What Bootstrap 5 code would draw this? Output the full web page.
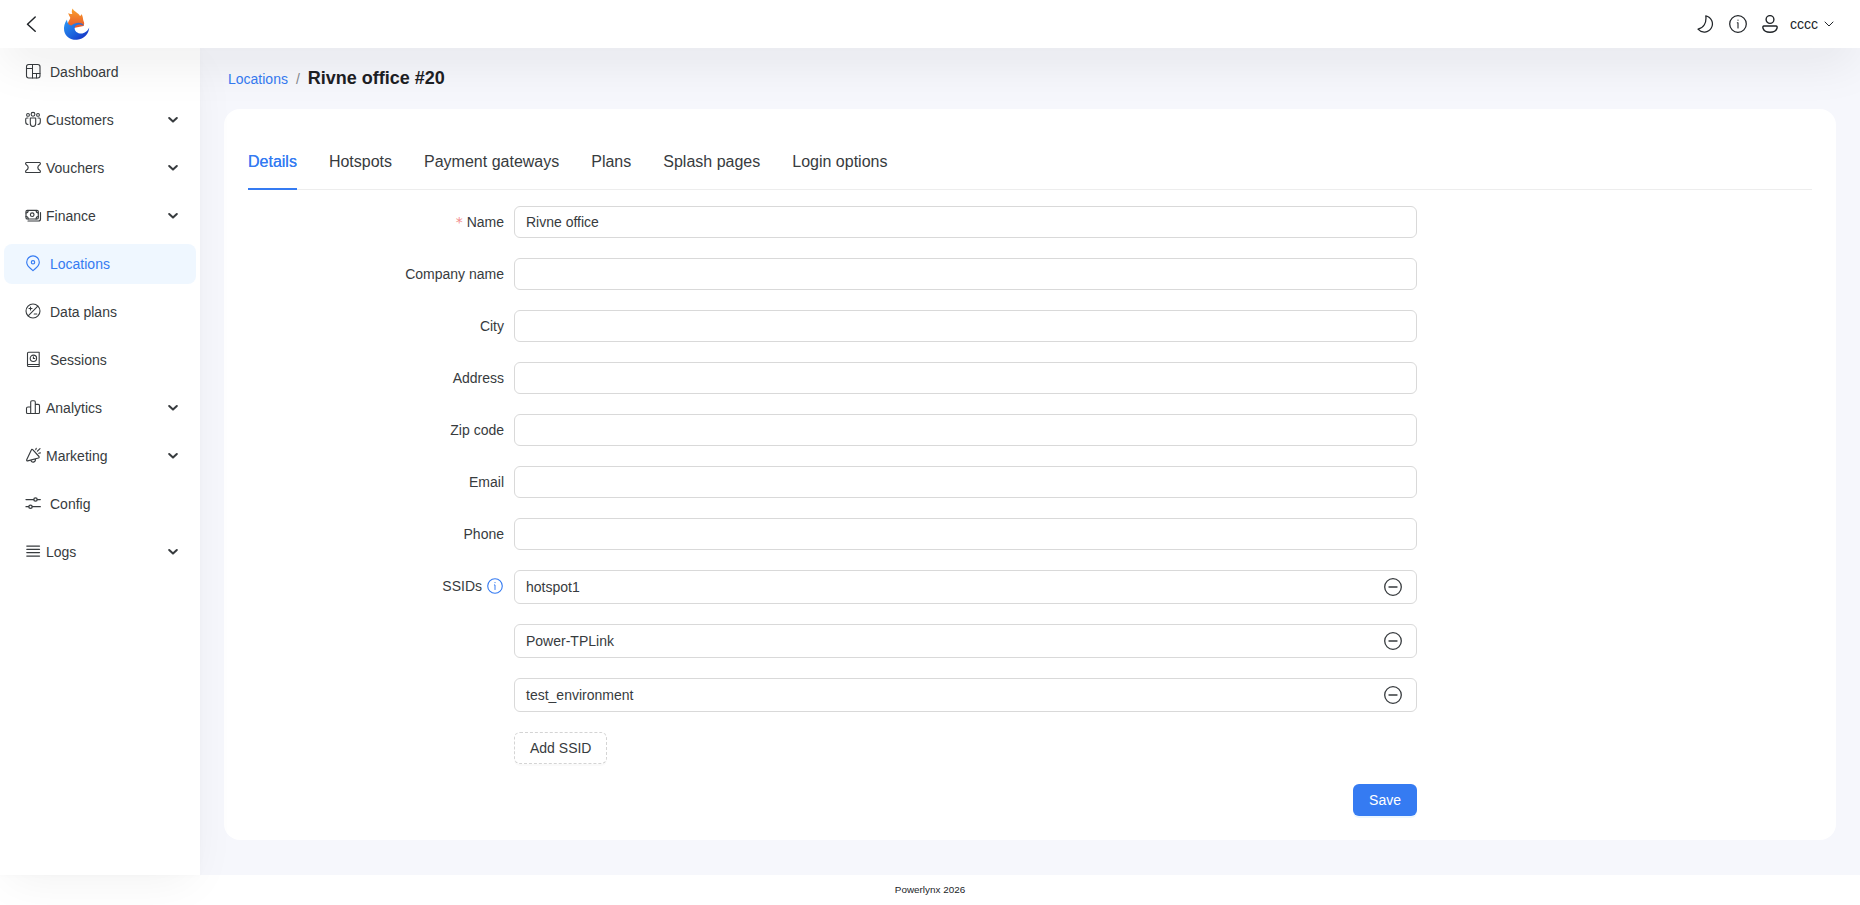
<!DOCTYPE html>
<html lang="en">
<head>
<meta charset="utf-8">
<meta name="viewport" content="width=device-width, initial-scale=1">
<title>Rivne office #20</title>
<link href="https://cdn.jsdelivr.net/npm/bootstrap@5.3.0/dist/css/bootstrap.min.css" rel="stylesheet">
<style>
:root { --ink: #373b3e; --blue: #357bf2; }
body { font: 14px/22px "Liberation Sans", Arial, sans-serif; color: var(--ink); background: #f6f7fc; height: 100vh; overflow: hidden; }
svg { display: block; flex: none; fill: none; stroke: currentColor; stroke-linecap: round; stroke-linejoin: round; }
.topbar { height: 48px; z-index: 3; padding: 0 26px 0 22px; box-shadow: 0 16px 50px -4px rgba(20,20,20,.085); color: #212529; }
.brand-mark { margin: 0 auto 0 21px; }
.tools { gap: 14px; margin-right: 11px; }
.sidebar { width: 200px; z-index: 2; padding: 4px; box-shadow: 0 12px 45px -8px rgba(20,20,20,.06), 0 0 6px rgba(20,20,20,.02); }
.sidebar .nav-link { height: 40px; padding: 0 18px 0 20px; margin-bottom: 8px; border-radius: 8px; color: var(--ink); gap: 8px; }
.sidebar .nav-link.has-menu { gap: 4px; }
.sidebar .nav-link.active { background: #eff7ff; color: var(--blue); }
.content-area { padding: 17px 24px 35px; }
.crumbs { height: 44px; padding-left: 4px; }
.crumbs a, .tabline .active { color: var(--blue) !important; }
.crumbs a { padding-top: 3px; }
.crumbs .divider { padding: 3px 8px 0; color: #85888c; }
.crumbs h1 { font-size: 18px; line-height: 26px; color: #1d2024; }
.panel { border-radius: 16px; padding: 32px 24px 0; }
.tabline { gap: 32px; border-bottom: 1px solid #ededed; height: 49px; margin-bottom: 16px; }
.tabline .nav-link { font-size: 16px; line-height: 24px; padding: 9px 0 0; height: 49px; color: var(--ink); }
.tabline .active { border-bottom: 2px solid var(--blue); text-shadow: 0 0 .25px currentColor; }
.field-row { margin-bottom: 20px; }
.field-label { width: 266px; height: 32px; padding-right: 10px; }
.required-star { color: #f28b8b; margin-right: 4px; font-family: "DejaVu Sans", sans-serif; }
.hint { color: var(--blue); margin: 0 1px 0 5px; }
.field-box { width: 903px; }
.form-control { height: 32px; border: 1px solid #d9d9d9; border-radius: 6px; padding: 4px 11px; font-size: 14px; line-height: 22px; color: var(--ink); }
.ssid { height: 34px; padding-right: 14px; }
.btn { font-size: 14px; line-height: 22px; height: 32px; padding: 4px 15px; border-radius: 6px; }
.btn-add { border: 1px dashed #d4d4d4; background: #fff; color: var(--ink); box-shadow: 0 2px 0 rgba(0,0,0,.02); }
.btn-save { background: var(--blue); color: #fff; box-shadow: 0 2px 0 rgba(5,145,255,.08); }
.foot { height: 30px; font-size: 9.900px; color: #212529; }
</style>
</head>
<body class="d-flex flex-column">
<header class="topbar bg-white d-flex align-items-center position-relative">
  <svg width="20" height="20" viewBox="0 0 20 20" stroke-width="1.5"><path d="M13.2 3 5.500 10.200 13.200 17.200"/></svg>
  <svg class="brand-mark" width="28" height="34" viewBox="0 0 28 34" stroke="none">
    <defs>
      <linearGradient id="flame" x1="0" y1="0" x2="0" y2="1"><stop stop-color="#fba22c"/><stop offset="1" stop-color="#e4502b"/></linearGradient>
      <linearGradient id="wave" x1="0" y1="0" x2="1" y2="1"><stop stop-color="#2d9af5"/><stop offset=".55" stop-color="#1c62dc"/><stop offset="1" stop-color="#1524bd"/></linearGradient>
    </defs>
    <path fill="url(#flame)" stroke="none" d="M5 18C4.500 14 7.500 12.500 7.200 10.500 6.600 9 5.500 8 5.300 6 6.500 7 8 7.300 9.300 6.700 8.500 5 8.700 3 9.700 1.500c.8 3 5.600 4 7.300 7.500.8-.2 1.200-1 1.300-2C20.300 9.500 19.800 12 20.500 14c.9 1.500.9 3.300 0 5L6 22z"/>
    <path fill="url(#wave)" stroke="none" d="M4 12.500C1.500 16 .5 20 1.200 24 2.500 30 8 33.300 14 32.800 21 32 26 27 26.200 20.500c-1.700 3.800-5.200 6.600-9.200 6-4-.6-6-3.700-5.200-6.500.9-2.500 5-3.500 9.200-1.200-2-3.800-8-4.300-12.500-.3-2.500 0-4.500-3-4.500-6z"/>
  </svg>
  <div class="tools d-flex align-items-center">
    <svg width="18" height="18" viewBox="0 0 18 18" stroke-width="1.250"><path d="M8.800.8A8.200 8.200 0 1 1 1 14.200C6.500 13 9.800 8 8.800.8z"/></svg>
    <svg width="18" height="18" viewBox="0 0 18 18" stroke-width="1.250"><circle cx="9" cy="9" r="8.300"/><path stroke-width="1.100" d="M8.300 7.800H9v5.200M9 5v.3"/></svg>
    <svg width="18" height="18" viewBox="0 0 18 18" stroke-width="1.400"><circle cx="9" cy="4.500" r="3.900"/><path d="M3 11h12c1 0 1.400 1 1 2.200-.8 2.600-3.500 4-7 4s-6.200-1.400-7-4C1.600 12 2 11 3 11z"/></svg>
  </div>
  <span>cccc</span>
  <svg style="margin-left:6px" width="10" height="10" viewBox="0 0 10 10"><path d="m1 3 4 4 4-4"/></svg>
</header>
<div class="d-flex flex-grow-1">
  <nav class="sidebar bg-white nav flex-column flex-nowrap position-relative" id="menu">
    <a class="nav-link d-flex align-items-center" href="#"><svg width="18" height="18" viewBox="0 0 18 18" stroke-width="1.100"><rect x="2.500" y="1.500" width="13.500" height="13.500" rx="2.200"/><path d="M8.500 1.500V15M2.500 5.500h6M8.500 10.500H16M12.500 10.500V15" stroke-width="1"/></svg><span>Dashboard</span></a>
    <a class="nav-link has-menu d-flex align-items-center" href="#"><svg width="18" height="18" viewBox="0 0 18 18" stroke-width="1.100"><circle cx="9" cy="3.300" r="1.900"/><circle cx="4" cy="3.900" r="1.400"/><circle cx="14" cy="3.900" r="1.400"/><path d="M6.300 7h5.400v5.300c0 2-1 3.200-2.700 3.200s-2.700-1.200-2.700-3.200zM4 7H2.700C2 7 1.700 7.500 1.700 8.300v2.500c0 1.600.8 2.700 2.300 2.700M14 7h1.300c.7 0 1 .5 1 1.300v2.500c0 1.600-.8 2.700-2.300 2.700"/></svg><span>Customers</span></a>
    <a class="nav-link has-menu d-flex align-items-center" href="#"><svg width="18" height="18" viewBox="0 0 18 18" stroke-width="1.200"><path d="M2.300 3.500h13.400c.9 0 .9 1.800 0 2.200-2.500 1.300-2.500 4.300 0 5.600.9.400.9 2.200 0 2.200H2.300c-.9 0-.9-1.800 0-2.200 2.500-1.300 2.500-4.300 0-5.600-.9-.4-.9-2.200 0-2.200z"/></svg><span>Vouchers</span></a>
    <a class="nav-link has-menu d-flex align-items-center" href="#"><svg width="18" height="18" viewBox="0 0 18 18" stroke-width="1.150"><rect x="2" y="3.300" width="12.300" height="8.700" rx="1.300"/><circle cx="8.200" cy="7.700" r="1.800"/><path d="M2 6c1.500 0 2.200-1 2.200-2.400M2 9.500c1.500 0 2.200 1 2.200 2.400M14.300 6c-1.500 0-2.200-1-2.200-2.400M14.300 9.500c-1.500 0-2.200 1-2.200 2.400M4 14h10.500c1.300 0 2-.8 2-2V5.500"/></svg><span>Finance</span></a>
    <a class="nav-link active d-flex align-items-center" href="#"><svg width="18" height="18" viewBox="0 0 18 18" stroke-width="1.150"><path d="M9 15.700C7.500 14 2.700 11.500 2.700 7.200a6.300 6.300 0 0 1 12.600 0c0 4.300-4.800 6.800-6.300 8.500z"/><circle cx="9" cy="7.300" r="1.700"/></svg><span>Locations</span></a>
    <a class="nav-link d-flex align-items-center" href="#"><svg width="18" height="18" viewBox="0 0 18 18" stroke-width="1.100"><circle cx="9" cy="8" r="7"/><path d="M4.200 12.800 13.800 3.200M5 5.500h3M6.500 4v3M10.200 11h2.600"/></svg><span>Data plans</span></a>
    <a class="nav-link d-flex align-items-center" href="#"><svg width="18" height="18" viewBox="0 0 18 18" stroke-width="1.100"><path d="M4.500 1.300h10.700v12.200H3.500V2.300c0-.6.400-1 1-1zM3.500 13.500v1c0 .6.400 1 1 1h10.700v-2"/><circle cx="9.400" cy="7.300" r="3.200"/><path d="M9.400 5.800v1.700h1.400"/></svg><span>Sessions</span></a>
    <a class="nav-link has-menu d-flex align-items-center" href="#"><svg width="18" height="18" viewBox="0 0 18 18" stroke-width="1.100"><path d="M6.700 14.500V3c0-.8.500-1.300 1.300-1.300h2c.8 0 1.300.5 1.300 1.300v11.500M6.700 8H4C3 8 2.500 8.500 2.500 9.200v4.300c0 .6.400 1 1 1h11c.6 0 1-.4 1-1V6.700c0-.7-.5-1.300-1.300-1.300h-2.900"/></svg><span>Analytics</span></a>
    <a class="nav-link has-menu d-flex align-items-center" href="#"><svg width="18" height="18" viewBox="0 0 18 18" stroke-width="1.150"><path d="M8.700 2.700 15 9.500c.4.700 0 1.300-.6 1.500L3.700 13.900c-.8.100-1.300-.5-1-1.200L7.300 3c.3-.7.900-.8 1.400-.3zM7 13.300c.3 3 4.700 2.200 4.500-1.200M11.800 2.700l.4-1.400M13.400 4.200l2.600-2.600M14.800 6.300l1.600-.4"/></svg><span>Marketing</span></a>
    <a class="nav-link d-flex align-items-center" href="#"><svg width="18" height="18" viewBox="0 0 18 18" stroke-width="1.250"><path d="M2 4.500h7.700M13.300 4.500h3M2 11.700h2.700M8.300 11.700h8"/><circle cx="11.500" cy="4.500" r="1.700"/><circle cx="6.500" cy="11.700" r="1.700"/></svg><span>Config</span></a>
    <a class="nav-link has-menu d-flex align-items-center" href="#"><svg width="18" height="18" viewBox="0 0 18 18" stroke-width="1.250"><path d="M2.800 3h12.700M2.800 6.300h12.700M2.800 9.600h12.700M2.800 13h12.700"/></svg><span>Logs</span></a>
  </nav>
  <main class="content-area flex-grow-1 d-flex flex-column">
    <div class="crumbs d-flex align-items-start">
      <a class="text-decoration-none" href="#">Locations</a>
      <span class="divider">/</span>
      <h1 class="m-0 fw-bold">Rivne office #20</h1>
    </div>
    <section class="panel bg-white flex-grow-1">
      <nav class="nav tabline">
        <a class="nav-link active" href="#">Details</a>
        <a class="nav-link" href="#">Hotspots</a>
        <a class="nav-link" href="#">Payment gateways</a>
        <a class="nav-link" href="#">Plans</a>
        <a class="nav-link" href="#">Splash pages</a>
        <a class="nav-link" href="#">Login options</a>
      </nav>
      <form>
        <div class="field-row d-flex"><label class="field-label d-flex align-items-center justify-content-end"><span class="required-star">*</span>Name</label><div class="field-box"><input class="form-control" value="Rivne office"></div></div>
        <div class="field-row d-flex"><label class="field-label d-flex align-items-center justify-content-end">Company name</label><div class="field-box"><input class="form-control"></div></div>
        <div class="field-row d-flex"><label class="field-label d-flex align-items-center justify-content-end">City</label><div class="field-box"><input class="form-control"></div></div>
        <div class="field-row d-flex"><label class="field-label d-flex align-items-center justify-content-end">Address</label><div class="field-box"><input class="form-control"></div></div>
        <div class="field-row d-flex"><label class="field-label d-flex align-items-center justify-content-end">Zip code</label><div class="field-box"><input class="form-control"></div></div>
        <div class="field-row d-flex"><label class="field-label d-flex align-items-center justify-content-end">Email</label><div class="field-box"><input class="form-control"></div></div>
        <div class="field-row d-flex"><label class="field-label d-flex align-items-center justify-content-end">Phone</label><div class="field-box"><input class="form-control"></div></div>
        <div class="d-flex">
          <label class="field-label d-flex align-items-center justify-content-end">SSIDs<svg class="hint" width="16" height="16" viewBox="0 0 18 18" stroke-width="1.250"><circle cx="9" cy="9" r="8.200"/><path stroke-width="1.100" d="M8.300 7.800H9v5.200M9 5v.3"/></svg></label>
          <div class="field-box">
            <div class="field-row form-control ssid d-flex align-items-center justify-content-between"><span>hotspot1</span><svg width="18" height="18" viewBox="0 0 18 18" stroke-width="1.300"><circle cx="9" cy="9" r="8.300"/><path d="M5 9h8"/></svg></div>
            <div class="field-row form-control ssid d-flex align-items-center justify-content-between"><span>Power-TPLink</span><svg width="18" height="18" viewBox="0 0 18 18" stroke-width="1.300"><circle cx="9" cy="9" r="8.300"/><path d="M5 9h8"/></svg></div>
            <div class="field-row form-control ssid d-flex align-items-center justify-content-between"><span>test_environment</span><svg width="18" height="18" viewBox="0 0 18 18" stroke-width="1.300"><circle cx="9" cy="9" r="8.300"/><path d="M5 9h8"/></svg></div>
            <button type="button" class="btn btn-add d-block field-row">Add SSID</button>
            <button type="button" class="btn btn-save d-block ms-auto">Save</button>
          </div>
        </div>
      </form>
    </section>
  </main>
</div>
<footer class="foot bg-white d-flex align-items-center justify-content-center">Powerlynx 2026</footer>
<script src="https://cdn.jsdelivr.net/npm/bootstrap@5.3.0/dist/js/bootstrap.bundle.min.js"></script>
<script>
document.querySelectorAll('.has-menu').forEach(function (item) {
  item.insertAdjacentHTML('beforeend', '<svg class="ms-auto" width="10" height="10" viewBox="0 0 10 10" stroke-width="2"><path d="m1.200 3 3.800 3.600L8.800 3"/></svg>');
});
</script>
</body>
</html>
